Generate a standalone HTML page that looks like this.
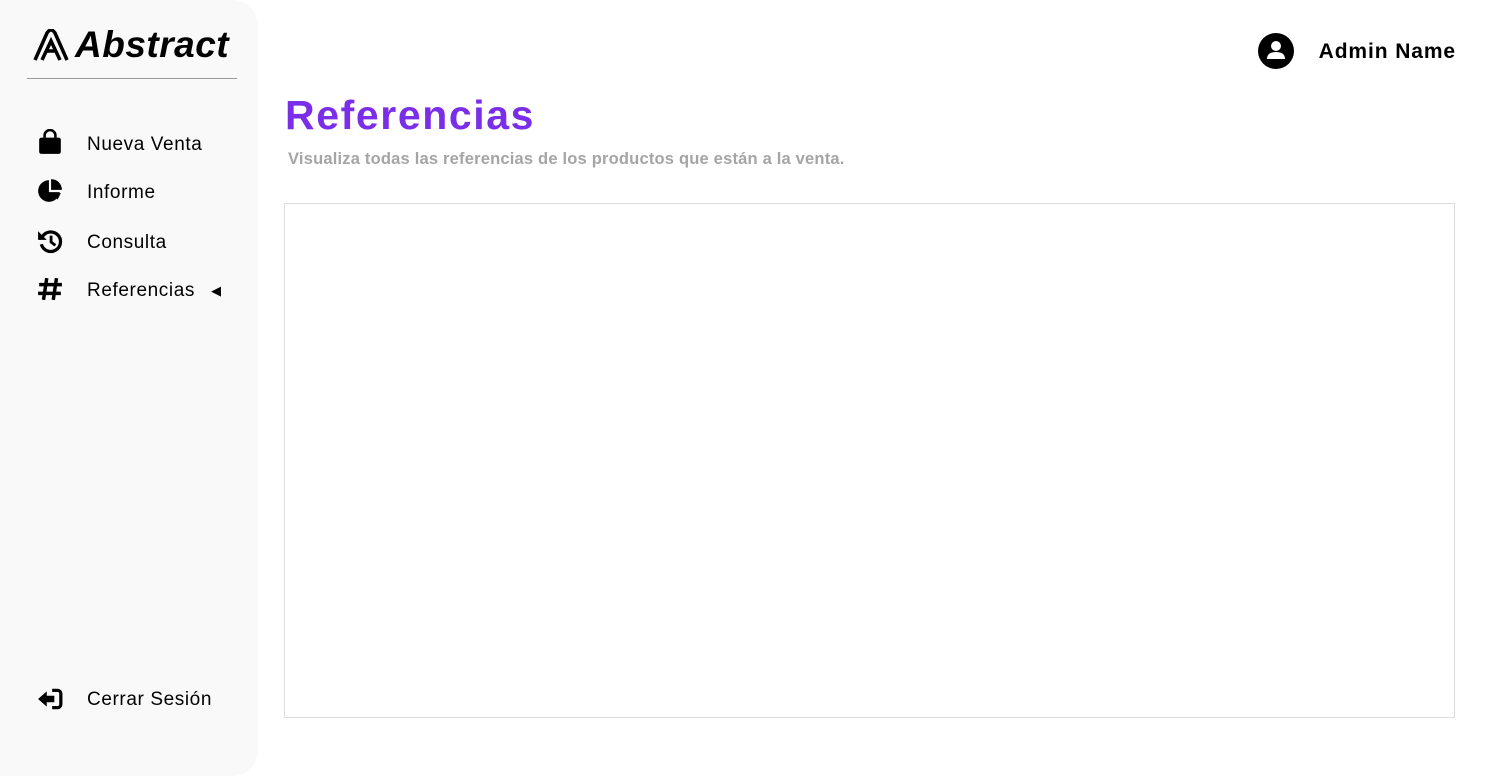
<!DOCTYPE html>
<html><head><meta charset="utf-8"><style>
*{margin:0;padding:0;box-sizing:border-box}
body{width:1503px;height:776px;background:#fff;font-family:"Liberation Sans",sans-serif;position:relative;overflow:hidden}
.side{position:absolute;left:0;top:0;width:258px;height:776px;background:#f9f9f9;border-radius:0 26px 26px 0}
.logo{position:absolute;left:33px;top:24px;font-size:37px;font-weight:bold;font-style:italic;color:#000;letter-spacing:0.5px}
.logo svg{vertical-align:-4px;margin-right:6px}
.hr{position:absolute;left:27px;top:78px;width:210px;height:1px;background:#999}
.item{position:absolute;left:37px;font-size:19px;color:#000;display:flex;align-items:center;letter-spacing:0.6px}
.item svg{width:26px;height:26px;margin-right:24px}
.topu{position:absolute;right:47px;top:33px;display:flex;align-items:center;font-size:21px;font-weight:bold;letter-spacing:0.9px}
h1{position:absolute;left:285px;top:92px;font-size:41px;color:#7b2ee8;font-weight:bold;letter-spacing:1.6px}
.sub{position:absolute;left:288px;top:150px;font-size:16.5px;color:#a5a5a5;font-weight:bold;letter-spacing:0.2px}
.box{position:absolute;left:284px;top:203px;width:1171px;height:515px;border:1px solid #ddd}
</style></head><body>
<div class="side">
<div class="logo"><svg width="36" height="32" viewBox="0 0 36 32" fill="none" stroke="#000" stroke-width="3.5"><path d="M2 31 L14 4 Q18 -2 22 4 L34 31"/><path d="M9 31 L18 12 L27 31"/><path d="M13 22 H23"/></svg>Abstract</div>
<div class="hr"></div>
<div class="item" style="top:129px"><svg viewBox="0 0 24 24"><path d="M7 8V6a5 5 0 0 1 10 0v2" fill="none" stroke="#000" stroke-width="2.4"/><rect x="2" y="8" width="20" height="15" rx="2" fill="#000"/></svg><span style="position:relative;top:3px">Nueva Venta</span></div>
<div class="item" style="top:178px"><svg viewBox="0 0 24 24"><path d="M11 2A10 10 0 1 0 21 13H11Z" fill="#000"/><path d="M13 1V11H23A10 10 0 0 0 13 1Z" fill="#000"/><path d="M13 14h9l-3 6z" fill="#000"/></svg><span style="position:relative;top:2px">Informe</span></div>
<div class="item" style="top:228px"><svg viewBox="0 0 24 24"><path d="M5 8A9 9 0 1 1 4 15" fill="none" stroke="#000" stroke-width="3"/><path d="M1 3v8h8z" fill="#000"/><path d="M13 7v6l4 3" fill="none" stroke="#000" stroke-width="2.6"/></svg><span style="position:relative;top:2px">Consulta</span></div>
<div class="item" style="top:276px"><svg viewBox="0 0 24 24"><path d="M9 2 6 22M18 2 15 22M2 8h21M1 16h21" stroke="#000" stroke-width="3.2"/></svg><span style="position:relative;top:2px">Referencias</span><span style="margin-left:16px;font-size:13px;position:relative;top:2px">◀</span></div>
<div class="item" style="top:686px"><svg viewBox="0 0 24 24"><path d="M14 4h5a3 3 0 0 1 3 3v10a3 3 0 0 1-3 3h-5" fill="none" stroke="#000" stroke-width="3"/><path d="M1 12 9 5v4h7v6H9v4z" fill="#000"/></svg><span style="position:relative;top:1px">Cerrar Sesión</span></div>
</div>
<div class="topu"><svg width="36" height="36" viewBox="0 0 36 36"><circle cx="18" cy="18" r="18" fill="#000"/><circle cx="18" cy="13" r="5" fill="#fff"/><path d="M9 26q0-7 9-7t9 7z" fill="#fff"/></svg><span style="margin-left:25px;position:relative;top:1px">Admin Name</span></div>
<h1>Referencias</h1>
<div class="sub">Visualiza todas las referencias de los productos que están a la venta.</div>
<div class="box"></div>
</body></html>
